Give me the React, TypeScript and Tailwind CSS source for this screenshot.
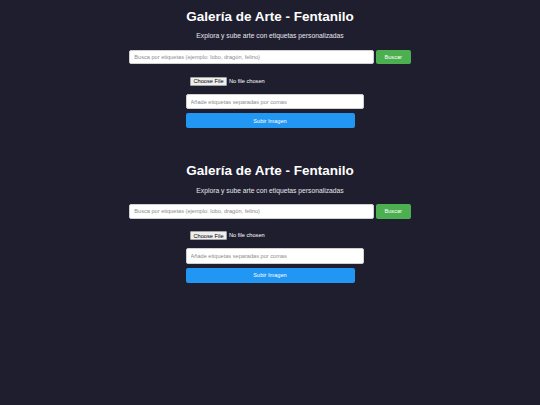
import React from "react";

const Gallery = () => {
  return (
    <section className="flex flex-col items-center">
      <h1 className="mt-[9px] text-[13.5px] leading-[15.5px] font-bold text-white">
        Galería de Arte - Fentanilo
      </h1>
      <p className="mt-[7.8px] text-[6.75px] leading-[7.75px] text-[#e6e6ec]">
        Explora y sube arte con etiquetas personalizadas
      </p>

      <div className="mt-[9.6px] flex gap-[2px]">
        <input
          type="text"
          placeholder="Busca por etiquetas (ejemplo: lobo, dragón, felino)"
          className="h-[14.5px] w-[244.5px] rounded-[2px] border border-[#d0d0d0] bg-white px-[4px] text-[5.63px] text-black outline-none placeholder:text-[#8c8c8c]"
        />
        <button className="h-[14.5px] w-[35px] rounded-[2px] bg-[#4caf50] text-[5.63px] text-white">
          Buscar
        </button>
      </div>

      <form className="mt-[12.8px] flex w-[169px] flex-col items-start">
        <input
          type="file"
          className="ml-[4.5px] text-[5.63px] leading-[6.5px] text-white file:mr-[2px] file:rounded-[1px] file:border file:border-[#a4a4a4] file:bg-[#efefef] file:px-[2.5px] file:py-[0.2px] file:text-black"
        />
        <input
          type="text"
          placeholder="Añade etiquetas separadas por comas"
          className="mt-[8.2px] h-[15.3px] w-[178px] rounded-[2px] border border-[#d0d0d0] bg-white px-[4px] text-[5.63px] text-black outline-none placeholder:text-[#8c8c8c]"
        />
        <button
          type="button"
          className="mt-[4px] h-[15px] w-[169px] rounded-[2px] bg-[#2196f3] text-[5.63px] text-white"
        >
          Subir Imagen
        </button>
      </form>
    </section>
  );
};

export default function App() {
  return (
    <div
      className="flex min-h-screen flex-col gap-[26.2px] bg-[#1e1e2f]"
      style={{ fontFamily: '"Liberation Sans", Arial, sans-serif' }}
    >
      <Gallery />
      <Gallery />
    </div>
  );
}
